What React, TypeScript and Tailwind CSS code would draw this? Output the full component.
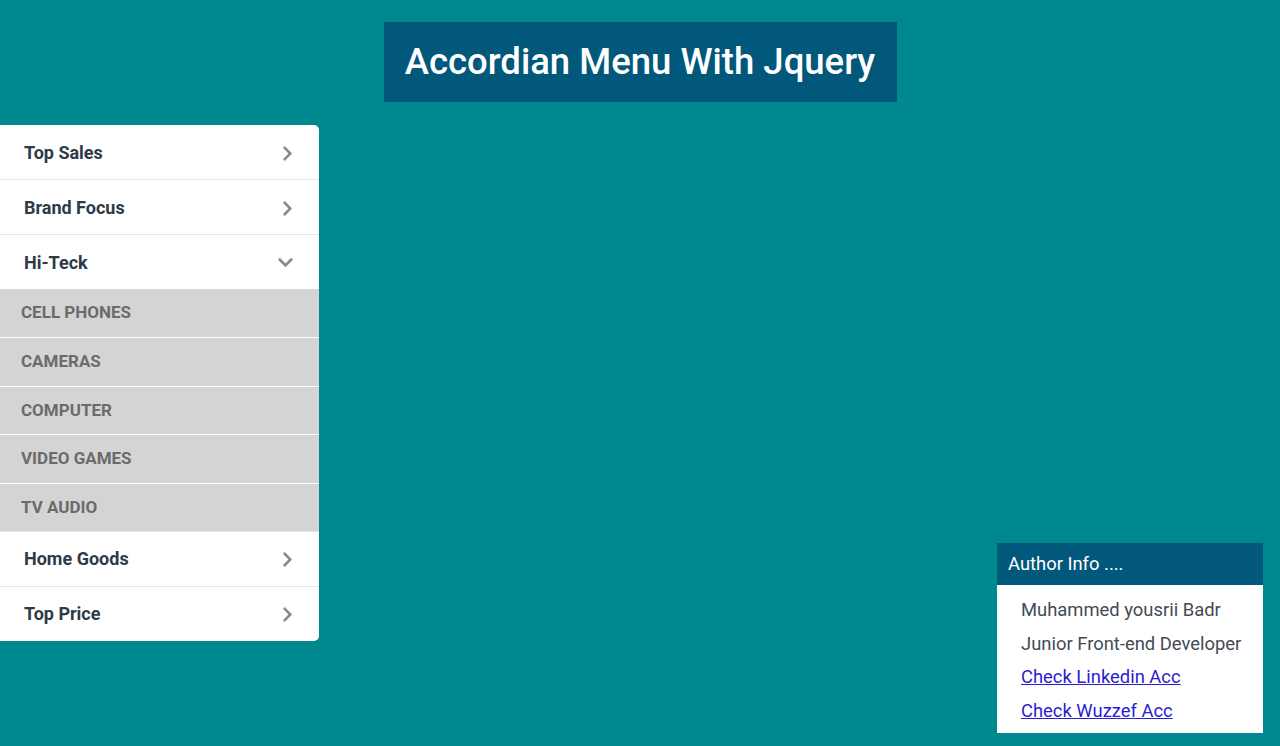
import { useState } from 'react';
import { FaChevronDown, FaChevronRight } from 'react-icons/fa';

type Section = {
    title: string;
    items: string[];
};

const sections: Section[] = [
    { title: 'Top Sales', items: ['Best Sellers', 'New Arrivals'] },
    { title: 'Brand Focus', items: ['Featured', 'Popular'] },
    { title: 'Hi-Teck', items: ['Cell Phones', 'Cameras', 'Computer', 'Video Games', 'TV Audio'] },
    { title: 'Home Goods', items: ['Kitchen', 'Furniture'] },
    { title: 'Top Price', items: ['Luxury', 'Premium'] },
];

const AccordionMenu = () => {
    const [open, setOpen] = useState<number | null>(2);

    return (
        <ul className="w-[319px] bg-white rounded-r-[5px] overflow-hidden">
            {sections.map((section, i) => (
                <li key={section.title} className="border-b border-[#e6e6e6] last:border-b-0">
                    <button
                        onClick={() => setOpen(open === i ? null : i)}
                        className="w-full h-[54px] flex items-center justify-between pl-6 pr-[26px] text-left text-[18px] font-bold text-[#2e3a48]"
                    >
                        <span>{section.title}</span>
                        {open === i ? (
                            <FaChevronDown className="text-[#8a8a8a] w-[17px] h-[17px] -mr-[1px]" />
                        ) : (
                            <FaChevronRight className="text-[#8a8a8a] w-[17px] h-[17px] mt-[2px] -mr-[3px]" />
                        )}
                    </button>
                    {open === i && (
                        <ul className="bg-[#d4d4d4]">
                            {section.items.map((item) => (
                                <li
                                    key={item}
                                    className="h-[48.4px] flex items-center pl-[21px] border-t border-white first:border-t-0 text-[17px] font-bold uppercase text-[#6b6b6b]"
                                >
                                    {item}
                                </li>
                            ))}
                        </ul>
                    )}
                </li>
            ))}
        </ul>
    );
};

const AuthorInfo = () => (
    <div className="absolute right-[17px] bottom-[13px] w-[266px] bg-white">
        <div className="h-[42px] flex items-center px-[11px] bg-[#02587a] text-white text-[18.4px]">
            Author Info ....
        </div>
        <ul className="pl-6 pt-[8px] pb-[6px] text-[18.4px] text-[#444b55] leading-[33.5px]">
            <li>Muhammed yousrii Badr</li>
            <li>Junior Front-end Developer</li>
            <li>
                <a href="#" className="text-[#2a1ecf] underline">Check Linkedin Acc</a>
            </li>
            <li>
                <a href="#" className="text-[#2a1ecf] underline">Check Wuzzef Acc</a>
            </li>
        </ul>
    </div>
);

export default function App() {
    return (
        <div className="relative min-h-[746px] bg-[#00888f] font-['Roboto',sans-serif] pt-[22px]">
            <div className="flex justify-center">
                <h1 className="w-[513px] h-[80px] flex items-center justify-center bg-[#02587a] text-white text-[36.5px] font-medium">
                    Accordian Menu With Jquery
                </h1>
            </div>
            <div className="mt-[23px]">
                <AccordionMenu />
            </div>
            <AuthorInfo />
        </div>
    );
}
